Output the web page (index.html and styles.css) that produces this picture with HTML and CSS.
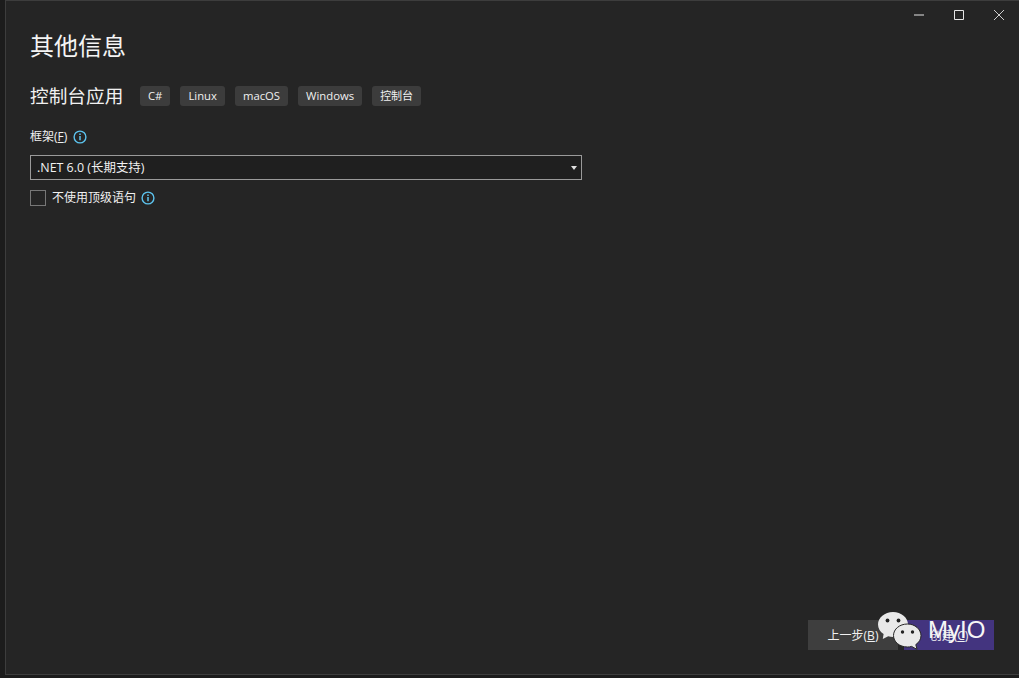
FILE: index.html
```html
<!DOCTYPE html>
<html lang="zh-CN">
<head>
<meta charset="utf-8">
<title>其他信息</title>
<link rel="stylesheet" href="styles.css">
</head>
<body>
<div class="window">
  <div class="controls">
    <svg class="ctl" width="12" height="12" viewBox="0 0 12 12"><path d="M1 6h10" stroke="#e6e6e6" fill="none"/></svg>
    <svg class="ctl" width="12" height="12" viewBox="0 0 12 12"><path d="M1.500 1.500h9v9h-9z" stroke="#e6e6e6" fill="none"/></svg>
    <svg class="ctl" width="12" height="12" viewBox="0 0 12 12"><path d="M1 1l10 10M11 1L1 11" stroke="#cfcfcf" fill="none"/></svg>
  </div>
  <main class="content">
    <h1 class="title">其他信息</h1>
    <div class="project">
      <h2 class="project-name">控制台应用</h2>
      <div class="tags">
        <span class="tag">C#</span>
        <span class="tag">Linux</span>
        <span class="tag">macOS</span>
        <span class="tag">Windows</span>
        <span class="tag tag-cjk">控制台</span>
      </div>
    </div>
    <div class="label-row">
      <label class="label">框架(<u>F</u>)</label>
      <svg class="info" width="14" height="14" viewBox="0 0 14 14"><circle cx="7" cy="7" r="5.900" fill="none" stroke="#5cc3ee" stroke-width="1.400"/><path d="M7 6v4.200" stroke="#5cc3ee" stroke-width="1.500"/><path d="M7 3.400v1.500" stroke="#5cc3ee" stroke-width="1.500"/></svg>
    </div>
    <div class="select">
      <span>.NET 6.0 (长期支持)</span>
      <span class="caret"></span>
    </div>
    <div class="check-row">
      <span class="checkbox"></span>
      <span class="check-label">不使用顶级语句</span>
      <svg class="info" width="14" height="14" viewBox="0 0 14 14"><circle cx="7" cy="7" r="5.900" fill="none" stroke="#5cc3ee" stroke-width="1.400"/><path d="M7 6v4.200" stroke="#5cc3ee" stroke-width="1.500"/><path d="M7 3.400v1.500" stroke="#5cc3ee" stroke-width="1.500"/></svg>
    </div>
  </main>
  <footer class="footer">
    <button class="btn btn-back">上一步(<u>B</u>)</button>
    <button class="btn btn-next">创建(<u>C</u>)</button>
  </footer>
  <div class="watermark">
    <svg class="wechat" width="46" height="40" viewBox="0 0 46 40">
      <path d="M16 1C7.700 1 1 6.700 1 13.500c0 4 2.200 7.300 5.600 9.600L5.800 28l5.400-2.700c1.600.4 3.200.7 4.800.7 8.300 0 15-5.600 15-12.500S24.300 1 16 1z" fill="#e9e9e9"/>
      <circle cx="10.500" cy="9.500" r="1.900" fill="#222"/><circle cx="21.500" cy="9.500" r="1.900" fill="#222"/>
      <path d="M30.500 13C22.500 13 16.500 18.200 16.500 24.500S22.500 36 30.500 36c1.500 0 2.800-.2 4.100-.6l5.400 3-1.200-4.800c3.200-2.100 5.200-5.300 5.200-9.100C43.800 18.200 38 13 30.500 13z" fill="#e9e9e9" stroke="#262626" stroke-width="1"/>
      <circle cx="25.500" cy="21" r="1.700" fill="#222"/><circle cx="35.500" cy="21" r="1.700" fill="#222"/>
    </svg>
    <span class="wm-text">MyIO</span>
  </div>
</div>
</body>
</html>
```

FILE: styles.css
```css
* { box-sizing: border-box; }
html, body { margin: 0; height: 100%; }
body {
  background: #1c1c1c;
  padding: 0 0 3px 5px;
  font-family: "Open Sans", "Noto Sans CJK SC", sans-serif;
  color: #f1f1f1;
  overflow: hidden;
}
.window {
  position: relative;
  height: 675px;
  background: #252525;
  border-left: 1px solid #3d3d3d;
  border-top: 1px solid #3d3d3d;
  border-bottom: 1px solid #3d3d3d;
  display: flex;
  flex-direction: column;
}
.controls {
  position: absolute;
  top: 8px;
  right: 14px;
  display: flex;
  gap: 28px;
}
.ctl { display: block; }
.content { padding: 27px 0 0 24px; flex: 1; }
.title {
  margin: 0;
  font-size: 24px;
  line-height: 36px;
  font-weight: 400;
  color: #f4f4f4;
}
.project { display: flex; align-items: center; margin-top: 18px; }
.project-name { margin: 0; font-size: 18.670px; line-height: 28px; font-weight: 400; }
.tags { display: flex; gap: 10px; margin-left: 16.700px; }
.tag {
  background: #3c3c3c;
  border-radius: 3px;
  height: 20px;
  padding: 0 8px;
  font-size: 11.300px;
  line-height: 20px;
  color: #f0f0f0;
}
.tag-cjk { font-size: 11px; }
.label-row { display: flex; align-items: center; gap: 6px; margin-top: 18px; height: 18px; }
.label, .check-label { font-size: 12px; line-height: 18px; color: #f0f0f0; }
.select {
  width: 552px;
  height: 25px;
  margin-top: 9px;
  background: #1f1f1f;
  border: 1px solid #9a9a9a;
  padding: 0 6px;
  font-size: 12.440px;
  line-height: 23px;
  display: flex;
  justify-content: space-between;
  align-items: center;
}
.caret {
  width: 0;
  height: 0;
  border-left: 3.500px solid transparent;
  border-right: 3.500px solid transparent;
  border-top: 4px solid #e0e0e0;
  margin-right: -2px;
}
.check-row { display: flex; align-items: center; margin-top: 9px; height: 17px; }
.checkbox { width: 16px; height: 16px; border: 1px solid #777; background: #252525; margin-right: 6px; }
.check-label { padding-top: 1px; }
.check-row .info { margin-left: 5px; margin-top: 1px; }
.footer {
  position: absolute;
  right: 25px;
  bottom: 24px;
  display: flex;
  gap: 6px;
}
.btn {
  width: 90px;
  height: 30px;
  border: 0;
  padding: 0;
  font: inherit;
  font-size: 12px;
  color: #f1f1f1;
}
.btn-back { background: #3e3e3e; }
.btn-next { background: #43347f; }
.watermark {
  position: absolute;
  left: 871px;
  top: 610px;
  display: flex;
  align-items: flex-start;
}
.wechat { display: block; }
.wm-text {
  font-family: "Liberation Sans", sans-serif;
  font-size: 24px;
  line-height: 28px;
  color: #f6f6f6;
  margin-left: 5px;
  margin-top: 5px;
}
```
